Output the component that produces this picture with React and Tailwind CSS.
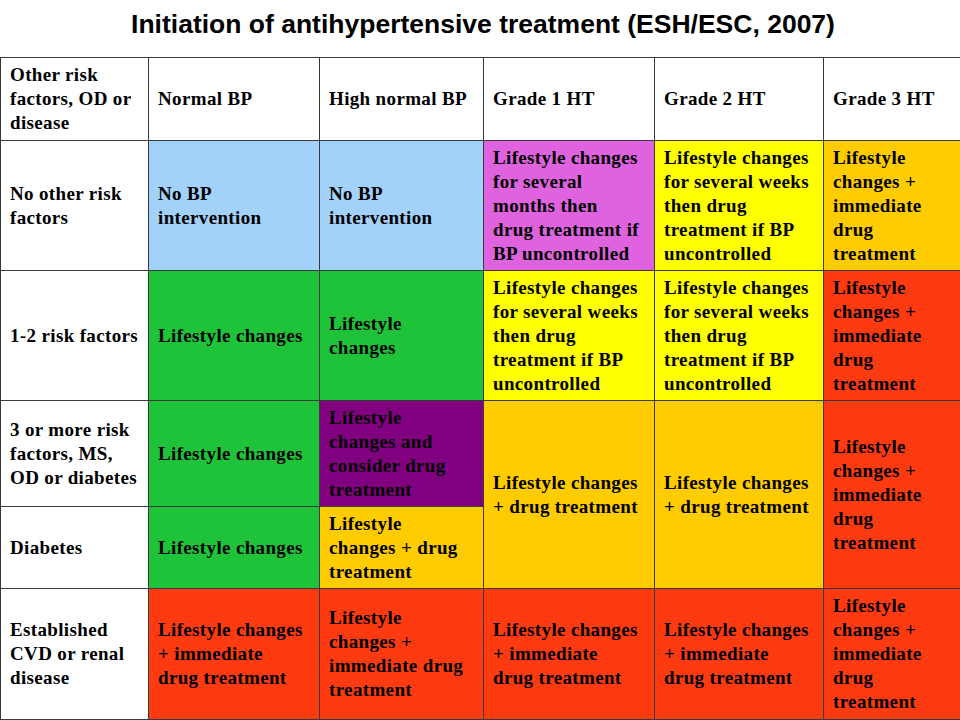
const LB = 'bg-[#a2d2fa]'
const GR = 'bg-[#1ec339]'
const MG = 'bg-[#df63df]'
const YL = 'bg-[#ffff00]'
const OR = 'bg-[#ffcc00]'
const RD = 'bg-[#fd3a10]'
const PU = 'bg-[#800080]'

function Cell({ children, bg = 'bg-white', first = false, ...rest }) {
  const pr = first ? 'pr-[6px]' : 'pr-[14px]'
  return (
    <td className={`${bg} ${pr} border border-[#3a3a3a] align-middle pl-[9px] leading-6`} {...rest}>
      {children}
    </td>
  )
}

export default function App() {
  return (
    <div className="w-[960px] h-[720px] bg-white overflow-hidden">
      <h1 className="h-[57px] flex items-center justify-center pl-[6px] pb-[8px] text-[26.5px] font-bold text-black" style={{ fontFamily: '"Liberation Sans", Arial, sans-serif' }}>
        Initiation of antihypertensive treatment (ESH/ESC, 2007)
      </h1>
      <table className="border-collapse table-fixed w-[962px] text-[19px] tracking-[0.35px] font-bold text-black" style={{ fontFamily: '"Liberation Serif", "Times New Roman", serif' }}>
        <colgroup>
          <col className="w-[148px]" />
          <col className="w-[171px]" />
          <col className="w-[164px]" />
          <col className="w-[171px]" />
          <col className="w-[169px]" />
          <col className="w-[139px]" />
        </colgroup>
        <tbody>
          <tr className="h-[83px]">
            <Cell first>Other risk factors, OD or disease</Cell>
            <Cell>Normal BP</Cell>
            <Cell>High normal BP</Cell>
            <Cell>Grade 1 HT</Cell>
            <Cell>Grade 2 HT</Cell>
            <Cell>Grade 3 HT</Cell>
          </tr>
          <tr className="h-[130px]">
            <Cell first>No other risk factors</Cell>
            <Cell bg={LB}>No BP intervention</Cell>
            <Cell bg={LB}>No BP intervention</Cell>
            <Cell bg={MG}>Lifestyle changes for several months then drug treatment if BP uncontrolled</Cell>
            <Cell bg={YL}>Lifestyle changes for several weeks then drug treatment if BP uncontrolled</Cell>
            <Cell bg={OR}>Lifestyle changes + immediate drug treatment</Cell>
          </tr>
          <tr className="h-[130px]">
            <Cell first>1-2 risk factors</Cell>
            <Cell bg={GR}>Lifestyle changes</Cell>
            <Cell bg={GR}>Lifestyle changes</Cell>
            <Cell bg={YL}>Lifestyle changes for several weeks then drug treatment if BP uncontrolled</Cell>
            <Cell bg={YL}>Lifestyle changes for several weeks then drug treatment if BP uncontrolled</Cell>
            <Cell bg={RD}>Lifestyle changes + immediate drug treatment</Cell>
          </tr>
          <tr className="h-[106px]">
            <Cell first>3 or more risk factors, MS, OD or diabetes</Cell>
            <Cell bg={GR}>Lifestyle changes</Cell>
            <Cell bg={PU}>Lifestyle changes and consider drug treatment</Cell>
            <Cell bg={OR} rowSpan={2}>Lifestyle changes + drug treatment</Cell>
            <Cell bg={OR} rowSpan={2}>Lifestyle changes + drug treatment</Cell>
            <Cell bg={RD} rowSpan={2}>Lifestyle changes + immediate drug treatment</Cell>
          </tr>
          <tr className="h-[82px]">
            <Cell first>Diabetes</Cell>
            <Cell bg={GR}>Lifestyle changes</Cell>
            <Cell bg={OR}>Lifestyle changes + drug treatment</Cell>
          </tr>
          <tr className="h-[131px]">
            <Cell first>Established CVD or renal disease</Cell>
            <Cell bg={RD}>Lifestyle changes + immediate drug treatment</Cell>
            <Cell bg={RD}>Lifestyle changes + immediate drug treatment</Cell>
            <Cell bg={RD}>Lifestyle changes + immediate drug treatment</Cell>
            <Cell bg={RD}>Lifestyle changes + immediate drug treatment</Cell>
            <Cell bg={RD}>Lifestyle changes + immediate drug treatment</Cell>
          </tr>
        </tbody>
      </table>
    </div>
  )
}
